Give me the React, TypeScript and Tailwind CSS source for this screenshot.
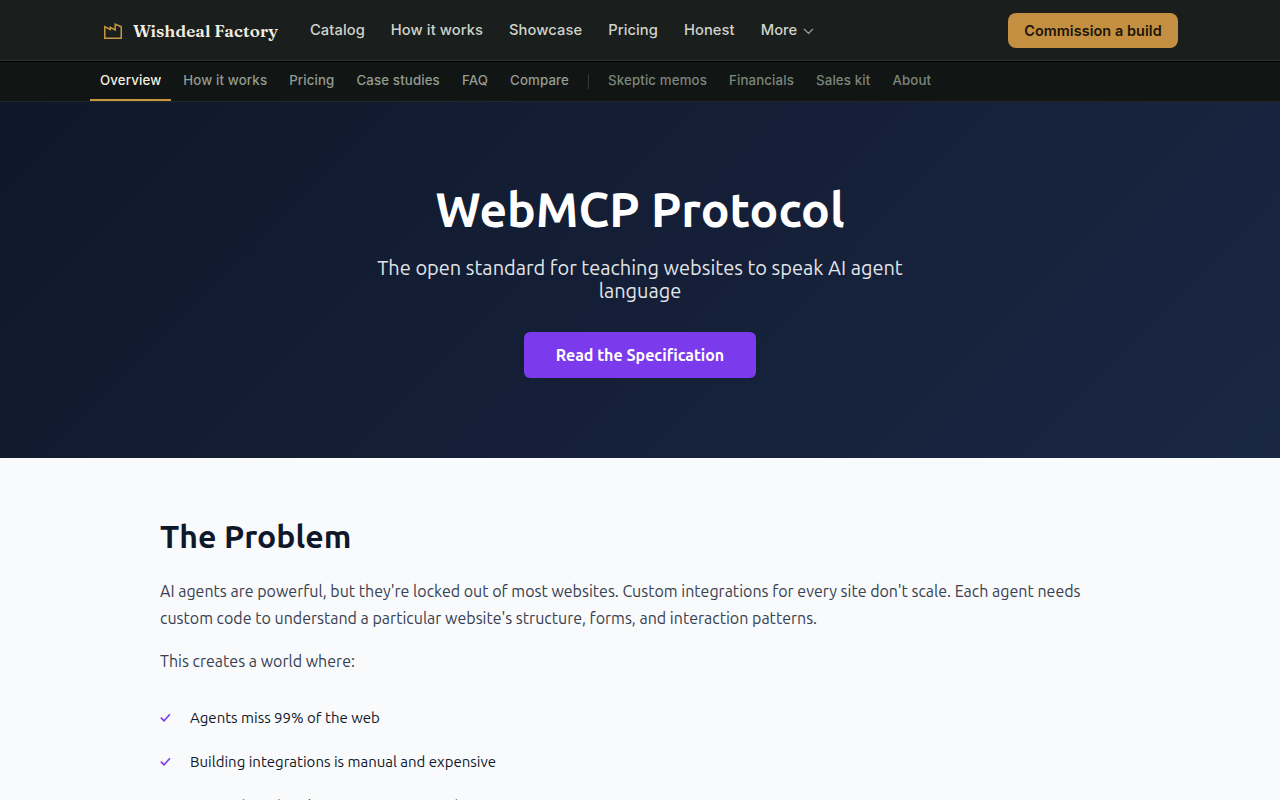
import React from "react";

const primaryLinks = ["Catalog", "How it works", "Showcase", "Pricing", "Honest"];
const productLinks = ["How it works", "Pricing", "Case studies", "FAQ", "Compare"];
const companyLinks = ["Skeptic memos", "Financials", "Sales kit", "About"];
const problems = [
  "Agents miss 99% of the web",
  "Building integrations is manual and expensive",
  "Site updates break integrations overnight",
];

function FactoryIcon() {
  return (
    <svg width="20" height="20" viewBox="0 0 20 20" fill="none" stroke="#c8963e" strokeWidth="1.5">
      <path d="M1.75 18.25V6.7L7.2 9.5V7.3L12.2 10V4.2L18.25 6.8V18.25Z" />
    </svg>
  );
}

export default function App() {
  return (
    <div className="h-[800px] overflow-hidden bg-[#f9fafc] font-['Ubuntu','Open_Sans',sans-serif]">
      <header className="flex h-[61px] items-center border-b border-[#2f3432] bg-[#1a1e1c] pr-[102px] pl-[103px] font-['Inter',sans-serif]">
        <a className="flex items-center gap-2.5">
          <FactoryIcon />
          <span className="w-[177px] pt-0.5 font-['Fraunces','Liberation_Serif',serif] text-[17px] font-semibold tracking-[0.09px] whitespace-nowrap text-[#f3ede0]">Wishdeal Factory</span>
        </a>
        <nav className="flex items-center gap-[26px] text-[14.72px] leading-[22px] font-medium tracking-[0.005em] whitespace-nowrap text-[#cfd3cb]">
          {primaryLinks.map((l) => <a key={l}>{l}</a>)}
          <a className="flex items-center gap-[5.5px]">More
            <svg className="mt-0.5" width="11" height="7" viewBox="0 0 11 7" fill="none" stroke="#a5aaa3" strokeWidth="1.2"><path d="M0.9 0.9L5.5 5.5L10.1 0.9" /></svg>
          </a>
        </nav>
        <button className="ml-auto h-[35px] w-[170px] rounded-lg bg-[#c29040] pt-0.5 text-[14.4px] font-semibold tracking-[0.006em] whitespace-nowrap text-[#1c1408]">Commission a build</button>
      </header>
      <nav className="flex h-[41px] items-stretch border-t border-b border-t-black border-b-[#232826] bg-[#111513] pl-[90px] font-['Inter',sans-serif] text-[13.28px] leading-[36px] font-medium tracking-[0.01em] whitespace-nowrap text-[#939c91]">
        <a className="border-b-2 border-[#c8963e] px-2.5 text-[#f3ede0]">Overview</a>
        <div className="flex gap-[22px] pl-3">{productLinks.map((l) => <a key={l}>{l}</a>)}</div>
        <span className="mx-[19px] mt-3 h-[15px] w-px bg-[#353a37]" />
        <div className="flex gap-[22px] text-[#7c867d]">{companyLinks.map((l) => <a key={l}>{l}</a>)}</div>
      </nav>
      <section className="flex h-[356px] flex-col items-center bg-linear-135 from-[#0f172a] to-[#1a2744] pt-[78px] text-center">
        <h1 className="text-[48px] leading-[58px] font-bold text-white">WebMCP Protocol</h1>
        <p className="mt-[18px] w-[600px] text-[20px] leading-[23px] text-[#e2e5ea]">The open standard for teaching websites to speak AI agent language</p>
        <button className="mt-[30px] h-[46px] w-[232px] rounded-md bg-[#7c3aed] text-[16px] font-semibold text-white">Read the Specification</button>
      </section>
      <main className="px-40 pt-[60px] text-[16px] leading-[27px] text-[#374151]">
        <h2 className="text-[32px] leading-[37px] font-bold text-[#0f172a]">The Problem</h2>
        <p className="mt-[23px]">AI agents are powerful, but they're locked out of most websites. Custom integrations for every site don't scale. Each agent needs<br />custom code to understand a particular website's structure, forms, and interaction patterns.</p>
        <p className="mt-4">This creates a world where:</p>
        <ul className="mt-5 text-[15px] text-[#0f172a]">
          {problems.map((p) => (
            <li key={p} className="flex h-11 items-center">
              <span className="w-[30px] font-bold text-[#7c3aed]">✓</span>{p}
            </li>
          ))}
        </ul>
      </main>
    </div>
  );
}
